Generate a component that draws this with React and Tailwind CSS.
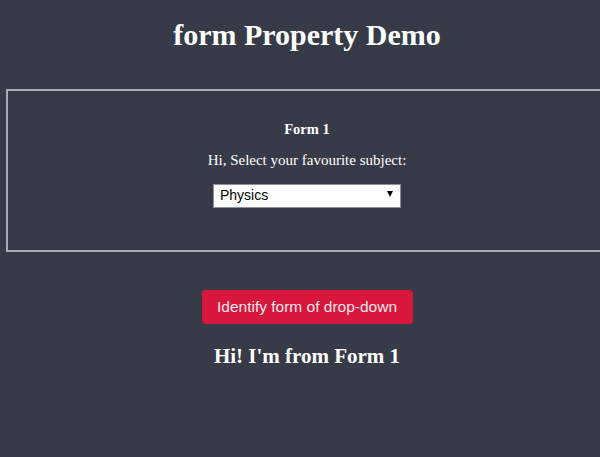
import { useState } from 'react';

export default function App() {
  const [subject, setSubject] = useState('Physics');
  const [message, setMessage] = useState("Hi! I'm from Form 1");

  return (
    <div className="w-[600px] h-[457px] overflow-hidden bg-[#373a47] text-white font-['Liberation_Serif',serif]">
      <div className="w-[614px]">
        {/* Title */}
        <h1 className="pt-[17px] text-center text-[30px] leading-[36px] font-bold">form Property Demo</h1>

        {/* Form box */}
        <form
          id="form1"
          className="mx-[6px] mt-[36px] border-2 border-[#a9acb5] pt-[28px] pb-[43px] text-center"
          onSubmit={(e) => e.preventDefault()}
        >
          <h4 className="text-[14.5px] leading-[20px] font-bold">Form 1</h4>
          <p className="mt-[11px] text-[15px] leading-[20px]">Hi, Select your favourite subject:</p>
          <div className="relative mx-auto mt-[13px] w-[188px] h-[24px]">
            <select
              value={subject}
              onChange={(e) => setSubject(e.target.value)}
              className="appearance-none w-full h-full bg-white border border-[#8d8f96] pl-[6px] text-[14px] text-black font-['Liberation_Sans',sans-serif] outline-none"
            >
              <option>Physics</option>
              <option>Chemistry</option>
              <option>Maths</option>
              <option>Biology</option>
            </select>
            <span className="pointer-events-none absolute right-[8px] top-[8px] w-0 h-0 border-l-[3.5px] border-r-[3.5px] border-t-[6px] border-l-transparent border-r-transparent border-t-black" />
          </div>
        </form>

        {/* Action */}
        <div className="text-center">
          <button
            onClick={() => setMessage("Hi! I'm from Form 1")}
            className="mt-[38px] h-[34px] w-[211px] rounded-[4px] bg-[#d8173d] text-[15.5px] text-[#f3e6ea] font-['Liberation_Sans',sans-serif]"
          >
            Identify form of drop-down
          </button>
          <h2 className="mt-[19px] text-[21px] leading-[26px] font-bold">{message}</h2>
        </div>
      </div>
    </div>
  );
}
